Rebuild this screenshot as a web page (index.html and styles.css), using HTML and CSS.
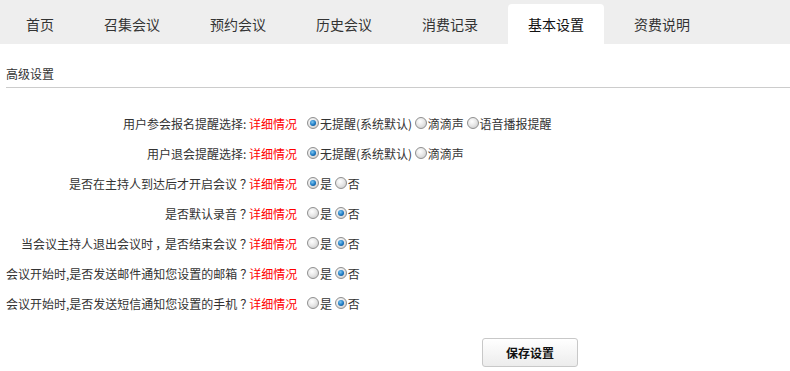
FILE: index.html
```html
<!DOCTYPE html>
<html lang="zh-CN">
<head>
<meta charset="utf-8">
<title>基本设置</title>
<link rel="stylesheet" href="styles.css">
</head>
<body>
<nav class="tabs">
  <a class="tab">首页</a>
  <a class="tab">召集会议</a>
  <a class="tab">预约会议</a>
  <a class="tab">历史会议</a>
  <a class="tab">消费记录</a>
  <a class="tab active">基本设置</a>
  <a class="tab">资费说明</a>
</nav>
<main class="content">
  <h2 class="section-title">高级设置</h2>
  <div class="form">
    <div class="label">用户参会报名提醒选择: <span class="detail">详细情况</span></div>
    <div class="opts"><span class="radio on"></span>无提醒(系统默认) <span class="radio"></span>滴滴声 <span class="radio"></span>语音播报提醒</div>

    <div class="label">用户退会提醒选择: <span class="detail">详细情况</span></div>
    <div class="opts"><span class="radio on"></span>无提醒(系统默认) <span class="radio"></span>滴滴声</div>

    <div class="label">是否在主持人到达后才开启会议<span class="q">？</span><span class="detail">详细情况</span></div>
    <div class="opts"><span class="radio on"></span>是 <span class="radio"></span>否</div>

    <div class="label">是否默认录音<span class="q">？</span><span class="detail">详细情况</span></div>
    <div class="opts"><span class="radio"></span>是 <span class="radio on"></span>否</div>

    <div class="label">当会议主持人退出会议时<span class="q">，</span>是否结束会议<span class="q">？</span><span class="detail">详细情况</span></div>
    <div class="opts"><span class="radio"></span>是 <span class="radio on"></span>否</div>

    <div class="label">会议开始时,是否发送邮件通知您设置的邮箱<span class="q">？</span><span class="detail">详细情况</span></div>
    <div class="opts"><span class="radio"></span>是 <span class="radio on"></span>否</div>

    <div class="label">会议开始时,是否发送短信通知您设置的手机<span class="q">？</span><span class="detail">详细情况</span></div>
    <div class="opts"><span class="radio"></span>是 <span class="radio on"></span>否</div>
  </div>
  <div class="actions"><button class="save">保存设置</button></div>
</main>
</body>
</html>
```
FILE: styles.css
```css
* { box-sizing: border-box; }
html, body { margin: 0; padding: 0; background: #fff; }
body {
  font-family: "Noto Sans CJK SC", "Noto Sans", sans-serif;
  color: #333;
  font-size: 12px;
}
.tabs {
  display: flex;
  background: #eeeeee;
  height: 44px;
  padding: 4px 0 0 6px;
}
.tab {
  display: block;
  padding: 0 20px;
  margin-right: 10px;
  font-size: 14px;
  line-height: 40px;
  color: #333;
  border-radius: 4px 4px 0 0;
}
.tab.active { background: #fff; color: #111; }
.content { padding: 0 0 0 6px; }
.section-title {
  margin: 0;
  font-weight: normal;
  font-size: 12px;
  line-height: 16px;
  padding: 22px 0 5px;
  border-bottom: 1px solid #cccccc;
  color: #333;
}
.form {
  display: grid;
  grid-template-columns: 291px 1fr;
  column-gap: 10px;
  grid-auto-rows: 30px;
  padding-top: 20px;
  align-items: center;
}
.label { text-align: right; white-space: nowrap; }
.q {
  font-family: "Noto Sans CJK JP", "Noto Sans CJK SC", sans-serif;
  font-feature-settings: "palt";
  padding: 0 3px;
}
.detail { color: #ff0000; }
.opts { display: flex; align-items: center; white-space: pre; }
.radio {
  display: inline-block;
  width: 12px;
  height: 12px;
  border-radius: 50%;
  border: 1px solid #8f8f8f;
  background: radial-gradient(circle at 40% 35%, #ffffff 0%, #e8e8e8 45%, #c4c4c4 100%);
  margin-right: 1px;
  position: relative;
}
.radio.on::after {
  content: "";
  position: absolute;
  left: 2px; top: 2px;
  width: 6px; height: 6px;
  border-radius: 50%;
  background: radial-gradient(circle at 40% 35%, #7fc7f2 0%, #1a78c2 55%, #0b3f74 100%);
}
.actions {
  display: flex;
  padding: 20px 0 0 476px;
}
.save {
  width: 96px;
  height: 29px;
  border: 1px solid #c8c8c8;
  border-radius: 3px;
  background: linear-gradient(#ffffff, #ececec);
  font-family: "Noto Sans CJK SC", sans-serif;
  font-size: 12px;
  font-weight: bold;
  color: #111;
  padding: 0;
}
```
